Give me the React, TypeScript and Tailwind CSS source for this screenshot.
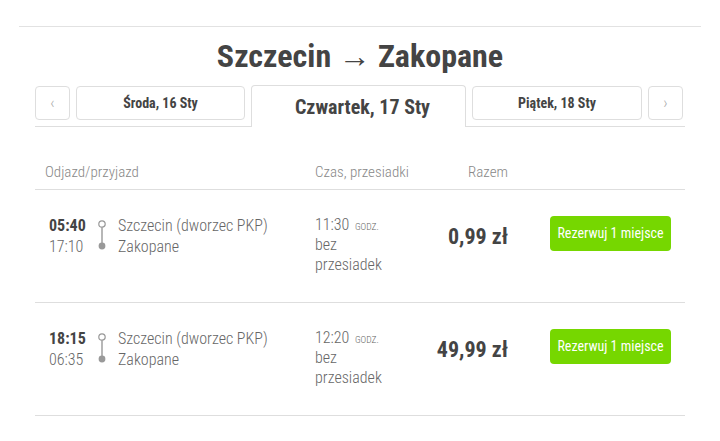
const FONT = "font-['Roboto_Condensed','Roboto',sans-serif]"

const connections = [
  { dep: '05:40', arr: '17:10', from: 'Szczecin (dworzec PKP)', to: 'Zakopane', duration: '11:30', price: '0,99 zł' },
  { dep: '18:15', arr: '06:35', from: 'Szczecin (dworzec PKP)', to: 'Zakopane', duration: '12:20', price: '49,99 zł' },
]

const COLS = 'grid grid-cols-[280px_100px_93px_1fr]'

function RouteIcon() {
  return (
    <svg width="10" height="32" viewBox="0 0 10 32" className="shrink-0">
      <circle cx="5" cy="5" r="3.2" fill="white" stroke="#999" strokeWidth="1.2" />
      <line x1="5" y1="8.2" x2="5" y2="25" stroke="#999" strokeWidth="1.4" />
      <circle cx="5" cy="27" r="3.4" fill="#999" />
    </svg>
  )
}

function DateBox({ children, width }: { children: React.ReactNode; width: string }) {
  return (
    <div
      className={`${width} h-[34px] mt-px flex items-center justify-center border border-[#dedede] rounded-[4px] bg-white`}
    >
      {children}
    </div>
  )
}

export default function App() {
  return (
    <div className={`${FONT} bg-white w-[720px] h-[441px] pt-[26px] px-[19px]`}>
      <div className="border-t border-[#e2e2e2] px-4">
        {/* Title */}
        <h1 className="text-center text-[32px] leading-[58px] font-bold text-[#444]">
          Szczecin → Zakopane
        </h1>

        {/* Date tabs */}
        <div className="flex items-start gap-[6px] border-b border-[#dedede] h-[42px]">
          <DateBox width="w-[35px]">
            <span className="text-[#aaa] text-base font-light">‹</span>
          </DateBox>
          <DateBox width="w-[169px]">
            <span className="text-[14px] font-bold text-[#444]">Środa, 16 Sty</span>
          </DateBox>
          <div className="w-[215px] h-[42px] -mb-px pl-2 flex items-center justify-center border border-b-0 border-[#dedede] rounded-t-[4px] bg-white relative">
            <span className="text-[20px] font-bold text-[#444]">Czwartek, 17 Sty</span>
          </div>
          <DateBox width="w-[170px]">
            <span className="text-[14px] font-bold text-[#444]">Piątek, 18 Sty</span>
          </DateBox>
          <DateBox width="w-[35px]">
            <span className="text-[#aaa] text-base font-light">›</span>
          </DateBox>
        </div>

        {/* Table header */}
        <div className={`${COLS} mt-[35px] h-[28px] border-b border-[#dedede] text-[15px] leading-[20px] font-light text-[#888]`}>
          <div className="pl-[10px]">Odjazd/przyjazd</div>
          <div>Czas, przesiadki</div>
          <div className="text-right">Razem</div>
          <div />
        </div>

        {/* Rows */}
        {connections.map((c, i) => (
          <div
            key={i}
            className={`${COLS} pt-[25px] h-[113px] border-b border-[#dedede] text-[#666] font-light`}
          >
            <div className="flex items-start pl-[14px]">
              <div className="w-[48px] text-[16px] leading-[21px]">
                <div className="font-bold text-[#444]">{c.dep}</div>
                <div>{c.arr}</div>
              </div>
              <div className="pt-[4px] pr-[11px]">
                <RouteIcon />
              </div>
              <div className="text-[16px] leading-[21px]">
                <div>{c.from}</div>
                <div>{c.to}</div>
              </div>
            </div>
            <div className="text-[16px] leading-[20px]">
              <div className="h-[20px]">
                {c.duration}{' '}
                <span className="ml-[2px] text-[9.5px] leading-none uppercase">godz.</span>
              </div>
              <div>bez</div>
              <div>przesiadek</div>
            </div>
            <div className="text-right whitespace-nowrap text-[22px] font-bold text-[#444] leading-[30px] mt-[7px]">
              {c.price}
            </div>
            <div className="flex justify-end pr-[14px] mt-px">
              <button className="h-[35px] w-[121px] rounded-[4px] bg-[#76d700] text-white text-[14px] font-normal">
                Rezerwuj 1 miejsce
              </button>
            </div>
          </div>
        ))}
      </div>
    </div>
  )
}
